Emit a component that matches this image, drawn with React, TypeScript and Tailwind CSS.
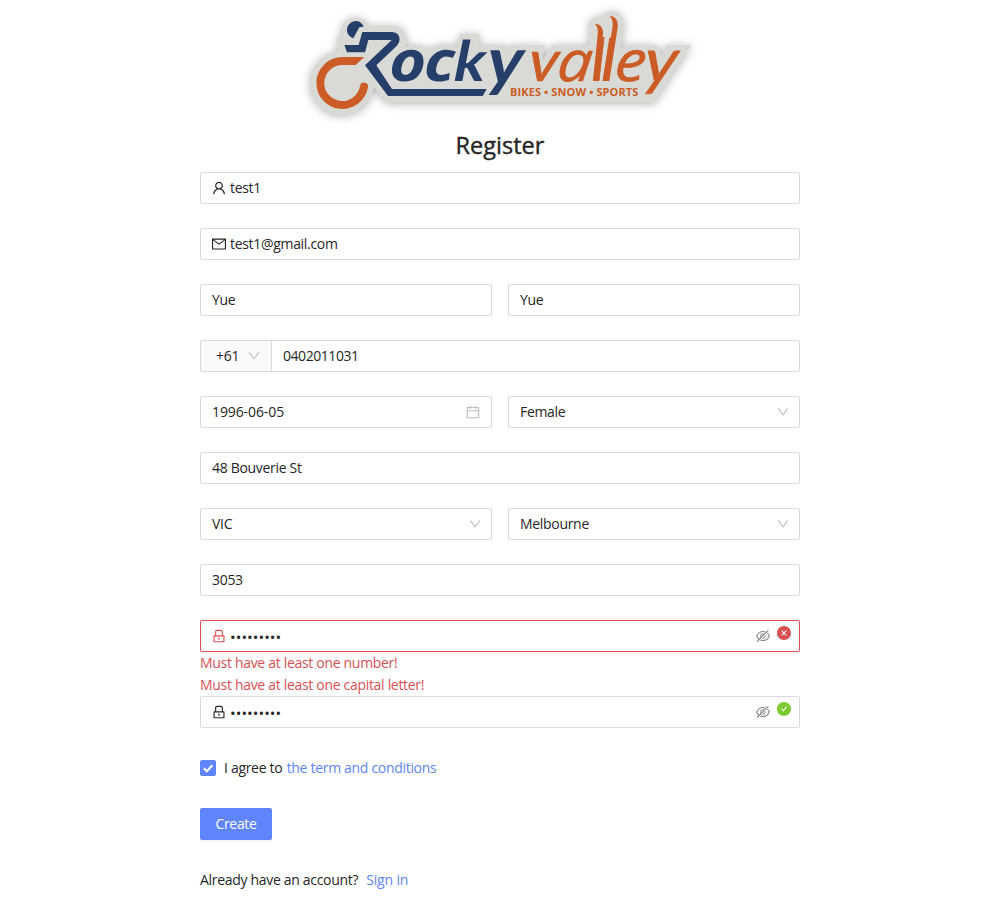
import type { ReactNode } from "react";
import {
  AiFillCheckCircle,
  AiFillCloseCircle,
  AiOutlineCalendar,
  AiOutlineDown,
  AiOutlineEyeInvisible,
  AiOutlineLock,
  AiOutlineMail,
  AiOutlineUser,
} from "react-icons/ai";

function Logo() {
  return (
    <svg className="h-[125px] w-[400px] overflow-visible" viewBox="0 0 1200 375" role="img">
      <path
        className="drop-shadow-[0_3px_14px_rgba(0,0,0,0.3)]"
        fill="#d9dad6"
        d="M205 78H285C309 78 319 99 319 131L318 142Q345 128 368 139L382 150Q410 132 438 134L474 138L480 101H540L535 135H615L624 150L636 135H735L727 180L758 135H866L868 80C864 55 888 47 908 52C916 26 958 28 968 56C974 70 972 90 968 105L962 146Q978 131 1002 135H1070L1085 165L1100 135H1174L1063 308H260L221 261A96 96 0 1 1 114 154L110 115H127A42 42 0 1 1 205 78Z"
      />
      <g fill="#263f6a">
        <path d="M191 80L178 82L160 115C140 108 135 85 148 72C161 58 184 61 191 80Z" />
        <path d="M187 96H276C300 96 306 122 290 138L229 196L276 267H560L548 288H264L195 196L275 120H205L195 157H141L133 135H176Z" />
        <text
          transform="matrix(1.12 0 -.06 1 0 242)"
          fontFamily="Open Sans, sans-serif"
          fontSize="168"
          fontWeight="700"
          fontStyle="italic"
        >
          <tspan x="237 330">oc</tspan>
          <tspan x="411" fontFamily="Lato, sans-serif">k</tspan>
          <tspan x="499" dy="9" fontFamily="Lato, sans-serif" fontSize="198">y</tspan>
        </text>
      </g>
      <g fill="#cb5c25">
        <path d="M193 171H127A78 78 0 1 0 204 262A12 12 0 0 0 180 258A54 54 0 1 1 127 195H167Z" />
        <text
          transform="matrix(1.1 0 -.1 1 0 242)"
          fontFamily="Lato, sans-serif"
          fontSize="172"
          fontStyle="italic"
          stroke="#cb5c25"
          strokeWidth="2"
        >
          <tspan x="619">v</tspan>
          <tspan x="698" fontFamily="Open Sans, sans-serif" fontSize="168">a</tspan>
          <tspan x="795 821" rotate="-6 -4">ll</tspan>
          <tspan x="855" fontFamily="Open Sans, sans-serif" fontSize="170">e</tspan>
          <tspan x="935" dy="7" fontSize="190">y</tspan>
        </text>
        <path d="M885 72C899 70 909 81 909 98L898 243H879L893 104C895 87 891 79 885 72Z" />
        <path d="M929 48C946 48 955 62 953 82L928 243H908L937 87C940 67 937 57 929 48Z" />
        <text x="630" y="288" fontFamily="Open Sans, sans-serif" fontSize="33" fontWeight="700" textLength="385">
          BIKES • SNOW • SPORTS
        </text>
      </g>
    </svg>
  );
}

function Field({ children, error }: { children: ReactNode; error?: boolean }) {
  return (
    <div
      className={`flex h-8 min-w-0 flex-1 items-center rounded-[2px] border px-[11px] ${
        error ? "border-[#da4f54]" : "border-[#d9d9d9]"
      }`}
    >
      {children}
    </div>
  );
}

const lead = "-ml-px mr-[3px] size-4 shrink-0";
const arrow = "-mr-[2px] ml-auto size-[14px] shrink-0 text-[#bfbfbf]";
const eye = "ml-auto mr-[5px] size-4 shrink-0 text-[#8c8c8c]";
const badge = "-mr-[4px] mb-[6px] size-4 shrink-0";

function Dots() {
  return <span className="pt-px text-[15px] tracking-[0.05px]">•••••••••</span>;
}

export default function App() {
  return (
    <div className="min-h-[920px] bg-white font-['Open_Sans',sans-serif] text-[14px] leading-[22px] tracking-[-0.31px] text-[#262626]">
      <div className="mx-auto w-[600px]">
        <div className="flex h-[125px] justify-center">
          <Logo />
        </div>
        <h1 className="mt-[5px] h-[42px] text-center text-[23.5px] leading-[31px] tracking-normal [-webkit-text-stroke:0.4px_#262626]">
          Register
        </h1>
        <form className="flex flex-col gap-6">
          <div className="flex"><Field><AiOutlineUser className={lead} />test1</Field></div>
          <div className="flex"><Field><AiOutlineMail className={lead} />test1@gmail.com</Field></div>
          <div className="flex gap-4"><Field>Yue</Field><Field>Yue</Field></div>
          <div className="flex h-8 items-center rounded-[2px] border border-[#d9d9d9]">
            <div className="flex h-full w-[71px] items-center border-r border-[#d9d9d9] bg-[#fafafa] pl-[15px]">
              +61<AiOutlineDown className="ml-2 size-[14px] text-[#bfbfbf]" />
            </div>
            <span className="pl-[11px] tracking-[-0.45px]">0402011031</span>
          </div>
          <div className="flex gap-4">
            <Field><span className="tracking-[-0.1px]">1996-06-05</span><AiOutlineCalendar className="-mr-px ml-auto size-4 text-[#bfbfbf]" /></Field>
            <Field>Female<AiOutlineDown className={arrow} /></Field>
          </div>
          <div className="flex"><Field>48 Bouverie St</Field></div>
          <div className="flex gap-4">
            <Field>VIC<AiOutlineDown className={arrow} /></Field>
            <Field>Melbourne<AiOutlineDown className={arrow} /></Field>
          </div>
          <div className="flex"><Field>3053</Field></div>
          <div>
            <div className="flex">
              <Field error>
                <AiOutlineLock className={`${lead} text-[#da4f54]`} />
                <Dots />
                <AiOutlineEyeInvisible className={eye} />
                <AiFillCloseCircle className={`${badge} text-[#da4f54]`} />
              </Field>
            </div>
            <div className="text-[#da4f54]">
              <p>Must have at least one number!</p>
              <p>Must have at least one capital letter!</p>
            </div>
            <div className="flex">
              <Field>
                <AiOutlineLock className={lead} />
                <Dots />
                <AiOutlineEyeInvisible className={eye} />
                <AiFillCheckCircle className={`${badge} text-[#7dcb33]`} />
              </Field>
            </div>
          </div>
        </form>
        <div className="mt-[29px] flex h-[22px] items-center">
          <span className="mr-2 flex size-4 items-center justify-center rounded-[2px] bg-[#6085fb]">
            <svg className="size-4" viewBox="0 0 16 16" fill="none" stroke="#fff" strokeWidth="2">
              <path d="M3.8 8.2L6.9 11.2L12.3 5.3" />
            </svg>
          </span>
          <span>I agree to <a className="ml-px text-[#6085fb]">the term and conditions</a></span>
        </div>
        <button className="mt-[29px] block h-8 w-[72px] rounded-[2px] bg-[#6085fb] text-white shadow-[0_2px_0_rgba(0,0,0,0.04)]">
          Create
        </button>
        <p className="mt-[29px]">Already have an account?<a className="ml-2 tracking-[-0.15px] text-[#6085fb]">Sign in</a></p>
      </div>
    </div>
  );
}
